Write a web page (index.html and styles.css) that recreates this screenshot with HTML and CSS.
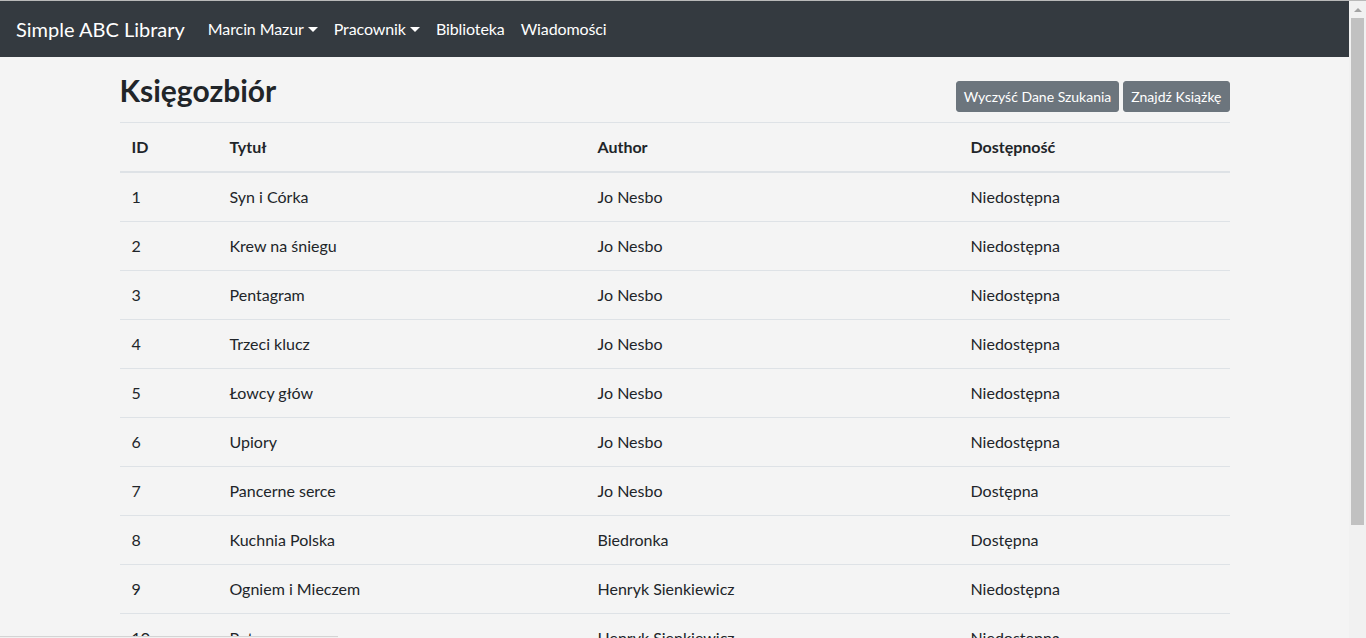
FILE: index.html
```html
<!DOCTYPE html>
<html lang="pl">
<head>
<meta charset="utf-8">
<title>Simple ABC Library</title>
<link rel="stylesheet" href="styles.css">
</head>
<body>
<div class="window">
  <div class="viewport">
    <nav class="navbar">
      <a class="brand" href="#">Simple ABC Library</a>
      <ul class="nav">
        <li><a class="nav-link dropdown" href="#">Marcin Mazur</a></li>
        <li><a class="nav-link dropdown" href="#">Pracownik</a></li>
        <li><a class="nav-link" href="#">Biblioteka</a></li>
        <li><a class="nav-link" href="#">Wiadomości</a></li>
      </ul>
    </nav>
    <main class="container">
      <div class="page-head">
        <h3 class="title">Księgozbiór</h3>
        <div class="actions">
          <button class="btn">Wyczyść Dane Szukania</button>
          <button class="btn">Znajdź Książkę</button>
        </div>
      </div>
      <table class="table">
        <colgroup>
          <col class="c-id"><col class="c-title"><col class="c-author"><col class="c-avail">
        </colgroup>
        <thead>
          <tr><th>ID</th><th>Tytuł</th><th>Author</th><th>Dostępność</th></tr>
        </thead>
        <tbody>
          <tr><td>1</td><td>Syn i Córka</td><td>Jo Nesbo</td><td>Niedostępna</td></tr>
          <tr><td>2</td><td>Krew na śniegu</td><td>Jo Nesbo</td><td>Niedostępna</td></tr>
          <tr><td>3</td><td>Pentagram</td><td>Jo Nesbo</td><td>Niedostępna</td></tr>
          <tr><td>4</td><td>Trzeci klucz</td><td>Jo Nesbo</td><td>Niedostępna</td></tr>
          <tr><td>5</td><td>Łowcy głów</td><td>Jo Nesbo</td><td>Niedostępna</td></tr>
          <tr><td>6</td><td>Upiory</td><td>Jo Nesbo</td><td>Niedostępna</td></tr>
          <tr><td>7</td><td>Pancerne serce</td><td>Jo Nesbo</td><td>Dostępna</td></tr>
          <tr><td>8</td><td>Kuchnia Polska</td><td>Biedronka</td><td>Dostępna</td></tr>
          <tr><td>9</td><td>Ogniem i Mieczem</td><td>Henryk Sienkiewicz</td><td>Niedostępna</td></tr>
          <tr><td>10</td><td>Potop</td><td>Henryk Sienkiewicz</td><td>Niedostępna</td></tr>
        </tbody>
      </table>
    </main>
  </div>
  <div class="scrollbar">
    <div class="sb-button"><span class="sb-arrow"></span></div>
    <div class="sb-thumb"></div>
  </div>
  <div class="status-bubble"></div>
</div>
</body>
</html>
```

FILE: styles.css
```css
* { box-sizing: border-box; }

html, body {
  margin: 0;
  padding: 0;
  height: 100%;
  overflow: hidden;
}

body {
  font-family: Lato, "Noto Sans", sans-serif;
  font-size: 16px;
  line-height: 24px;
  color: #212529;
  background: #f4f4f4;
}

.window {
  position: relative;
  display: flex;
  height: 638px;
  border-top: 1px solid #b9b9b9;
}

.viewport {
  flex: 1;
  min-width: 0;
  overflow: hidden;
}

/* navbar */
.navbar {
  display: flex;
  align-items: center;
  height: 56px;
  padding: 8px 16px;
  background: #343a40;
}

.brand {
  font-size: 20px;
  line-height: 30px;
  padding: 5px 0;
  margin-right: 15px;
  color: #fff;
  text-decoration: none;
  white-space: nowrap;
}

.nav {
  display: flex;
  list-style: none;
  margin: 0;
  padding: 0;
}

.nav-link {
  display: block;
  padding: 8px;
  color: #fff;
  text-decoration: none;
  white-space: nowrap;
  letter-spacing: -0.1px;
}

.dropdown::after {
  content: "";
  display: inline-block;
  margin-left: 4px;
  vertical-align: 3px;
  border-top: 5px solid #fff;
  border-left: 5px solid transparent;
  border-right: 5px solid transparent;
}

/* content */
.container {
  width: 1140px;
  margin: 0 auto;
  padding: 0 15px;
}

.page-head {
  display: flex;
  justify-content: space-between;
  align-items: baseline;
  padding-top: 16px;
  margin-bottom: 10px;
}

.title {
  margin: 0;
  font-size: 30px;
  line-height: 34px;
  font-weight: 700;
}

.actions {
  display: flex;
  gap: 4px;
}

.btn {
  font-family: inherit;
  font-size: 14px;
  line-height: 21px;
  padding: 4px 7px;
  color: #fff;
  background: #6c757d;
  border: 1px solid #6c757d;
  border-radius: 3px;
}

.table {
  width: 100%;
  table-layout: fixed;
  border-collapse: collapse;
}

.c-id { width: 98px; }
.c-title { width: 368px; }
.c-author { width: 373px; }

.table th,
.table td {
  padding: 12px;
  text-align: left;
  border-top: 1px solid #dee2e6;
  white-space: nowrap;
}

.table thead th {
  font-weight: 700;
  border-bottom: 2px solid #dee2e6;
}

/* fake scrollbar */
.scrollbar {
  width: 17px;
  flex: none;
  background: #f1f1f1;
  display: flex;
  flex-direction: column;
  align-items: center;
}

.sb-button {
  height: 17px;
  width: 17px;
  display: flex;
  justify-content: center;
  padding-top: 7px;
}

.sb-arrow {
  width: 0;
  height: 0;
  border-bottom: 4px solid #a3a3a3;
  border-left: 4px solid transparent;
  border-right: 4px solid transparent;
}

.sb-thumb {
  width: 13px;
  height: 507px;
  background: #c1c1c1;
}

/* browser status bubble at the bottom edge */
.status-bubble {
  position: absolute;
  left: 0;
  bottom: 0;
  width: 338px;
  height: 2px;
  background: #f1f1f1;
  border-top: 1px solid #d4d4d4;
}
```
